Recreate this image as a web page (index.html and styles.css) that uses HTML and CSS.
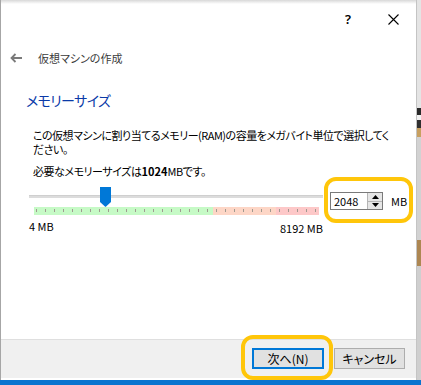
FILE: index.html
```html
<!DOCTYPE html>
<html lang="ja">
<head>
<meta charset="utf-8">
<link rel="stylesheet" href="styles.css">
</head>
<body>
<div class="screen">
  <div class="window">
    <div class="titlebar">
      <span class="tb-btn help">?</span>
      <span class="tb-btn close">
        <svg width="11" height="11" viewBox="0 0 11 11"><path d="M0.5 0.5 L10.5 10.5 M10.5 0.5 L0.5 10.5" stroke="#000" stroke-width="1.1" fill="none"/></svg>
      </span>
    </div>
    <div class="header">
      <svg class="back" width="12" height="10" viewBox="0 0 12 10"><path d="M12 5 H1.5 M5.5 1 L1.5 5 L5.5 9" stroke="#7a7a7a" stroke-width="1.8" fill="none"/></svg>
      <span class="title">仮想マシンの作成</span>
    </div>
    <div class="content">
      <h1 class="heading">メモリーサイズ</h1>
      <p class="desc"><span class="line">この仮想マシンに割り当てるメモリー(RAM)の容量をメガバイト単位で選択してく</span><span class="line">ださい。</span></p>
      <p class="req">必要なメモリーサイズは<b>1024</b>MBです。</p>
      <div class="slider-row">
        <div class="slider">
          <div class="track-area">
            <div class="track"></div>
            <div class="thumb"></div>
          </div>
          <div class="scale">
            <div class="zone green"></div>
            <div class="zone orange"></div>
            <div class="zone red"></div>
          </div>
          <div class="labels"><span>4 MB</span><span class="max">8192 MB</span></div>
        </div>
        <div class="spin">
          <span class="spin-val">2048</span>
          <div class="spin-btns">
            <span class="sb up"><svg width="7" height="4" viewBox="0 0 7 4"><path d="M0 4 L3.5 0 L7 4Z" fill="#000"/></svg></span>
            <span class="sb down"><svg width="7" height="4" viewBox="0 0 7 4"><path d="M0 0 L3.5 4 L7 0Z" fill="#000"/></svg></span>
          </div>
        </div>
        <span class="unit">MB</span>
      </div>
    </div>
    <div class="footer">
      <span class="btn primary">次へ(N)</span>
      <span class="btn">キャンセル</span>
    </div>
    <div class="mark mark-spin"></div>
    <div class="mark mark-next"></div>
  </div>
  <div class="edge"></div>
</div>
</body>
</html>
```

FILE: styles.css
```css
* { box-sizing: border-box; margin: 0; padding: 0; }
html, body { width: 421px; height: 385px; overflow: hidden; }
body {
  background: #0a74cf;
  font-family: "Noto Sans CJK JP", "Noto Sans", sans-serif;
  font-size: 12px;
  color: #000;
  font-feature-settings: "palt";
}
.screen { display: flex; height: 380px; }
.window {
  position: relative;
  width: 416px;
  height: 380px;
  background: #fff;
  border-left: 1px solid #a6a6a6;
  display: flex;
  flex-direction: column;
}
.edge {
  flex: 1;
  border-left: 1px solid #c4c4c4;
  background: linear-gradient(to bottom, #e4e4e4 0 108px, #2a2a2a 108px 115px, #f2f2f2 115px 120px, #303030 120px 128px, #c8a060 128px 137px, #d2d2d2 137px 240px, #ad8752 240px 266px, #cfcfcf 266px);
}
.titlebar {
  height: 40px;
  display: flex;
  justify-content: flex-end;
  align-items: center;
  padding-bottom: 2px;
  background: linear-gradient(#d8d8d8, #fff 4px);
}
.tb-btn { display: flex; align-items: center; justify-content: center; height: 24px; }
.help { width: 46px; font-family: "Noto Sans", sans-serif; font-size: 13px; font-weight: 600; }
.close { width: 45px; }
.header {
  height: 36px;
  display: flex;
  align-items: center;
  padding-left: 9px;
  gap: 16px;
}
.title { color: #3a3a3a; font-size: 11px; }
.content { padding-top: 14px; }
.heading {
  margin-left: 25px;
  font-size: 14px;
  line-height: 20px;
  font-weight: 400;
  letter-spacing: -0.6px;
  color: #0a3aa8;
}
.desc {
  margin: 19px 0 0 32px;
  display: flex;
  flex-direction: column;
  font-size: 11px;
  letter-spacing: -0.5px;
  white-space: nowrap;
}
.desc .line { display: block; height: 13.5px; line-height: 13.5px; }
.req {
  margin: 9px 0 0 32px;
  line-height: 13px;
  font-size: 11px;
  letter-spacing: -0.45px;
  white-space: nowrap;
}
.req b { font-weight: 700; letter-spacing: 0; }
.slider-row {
  margin: 5px 0 0 28px;
  display: flex;
  align-items: flex-start;
}
.slider { width: 294px; }
.track-area { position: relative; height: 24px; }
.track {
  position: absolute;
  left: 0; right: 0; top: 12px;
  height: 3px;
  background: #dcdcdc;
  border-top: 1px solid #cfcfcf;
}
.thumb {
  position: absolute;
  left: 71px; top: 4px;
  width: 11px; height: 20px;
  background: #0078d7;
  clip-path: polygon(0 0, 100% 0, 100% 75%, 50% 100%, 0 75%);
}
.scale {
  margin-left: 5px;
  width: 285px;
  height: 8px;
  display: flex;
  position: relative;
}
.scale::after {
  content: "";
  position: absolute;
  left: 2px; right: 0; top: 2px; height: 3px;
  background: repeating-linear-gradient(to right, #a09a90 0 1px, transparent 1px 9px);
}
.zone { height: 100%; }
.green { width: 179px; background: #c6fac6; }
.orange { width: 63px; background: #fdd6c6; }
.red { flex: 1; background: #fdc8c8; }
.labels {
  margin-top: 5px;
  display: flex;
  justify-content: space-between;
  line-height: 12px;
  font-size: 11px;
}
.labels .max { margin-top: 2px; }
.spin {
  margin: 9px 0 0 7px;
  width: 53px;
  height: 18px;
  border: 1px solid #7a7a7a;
  display: flex;
  align-items: center;
  justify-content: space-between;
  padding-left: 3px;
}
.spin-val { font-size: 11px; line-height: 16px; }
.spin-btns {
  width: 15px;
  height: 16px;
  display: flex;
  flex-direction: column;
  border-left: 1px solid #b5b5b5;
  background: #e6e6e6;
}
.sb { flex: 1; display: flex; align-items: center; justify-content: center; }
.sb.up { border-bottom: 1px solid #b5b5b5; }
.unit { margin: 10px 0 0 8px; line-height: 16px; font-size: 11px; }
.footer {
  margin-top: auto;
  margin-bottom: 2px;
  height: 39px;
  background: #f0f0f0;
  border-top: 1px solid #dfdfdf;
  display: flex;
  justify-content: flex-end;
  align-items: center;
  gap: 10px;
  padding: 0 11px 2px 0;
}
.btn {
  width: 71px;
  height: 21px;
  display: flex;
  align-items: center;
  justify-content: center;
  background: #e1e1e1;
  border: 1px solid #adadad;
  font-size: 12px;
}
.btn.primary { width: 72px; border: 2px solid #0078d7; }
.mark {
  position: absolute;
  border: 4px solid #ffc60a;
  border-radius: 12px;
}
.mark-spin { left: 323px; top: 177px; width: 89px; height: 46px; }
.mark-next { left: 240px; top: 335px; width: 92px; height: 45px; }
```
